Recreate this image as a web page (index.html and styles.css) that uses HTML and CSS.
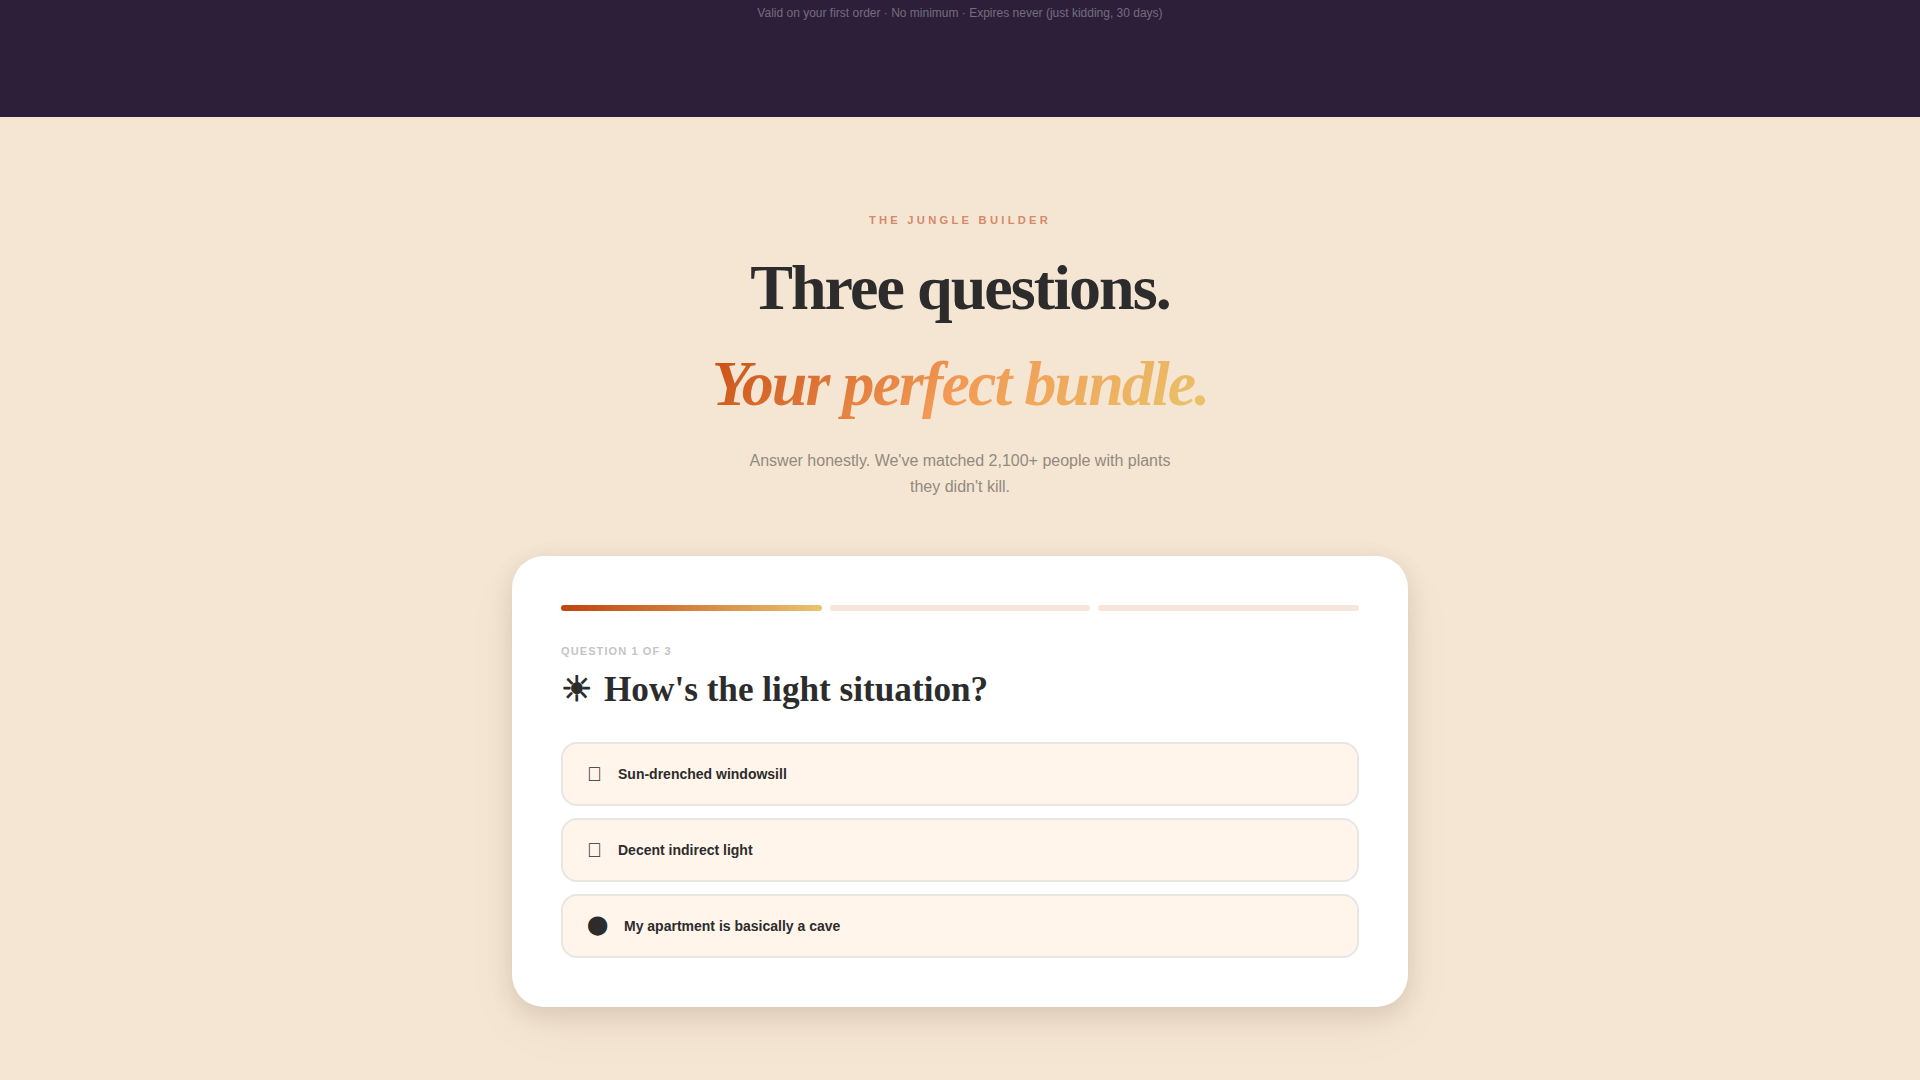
FILE: index.html
```html
<!DOCTYPE html>
<html lang="en">
<head>
  <meta charset="UTF-8">
  <title>The Jungle Builder</title>
  <link rel="stylesheet" href="styles.css">
</head>
<body>

  <div class="promo-end">
    <p>Valid on your first order · No minimum · Expires never (just kidding, 30 days)</p>
  </div>

  <section class="builder">
    <p class="eyebrow">THE JUNGLE BUILDER</p>
    <h1>Three questions.</h1>
    <h1 class="accent"><em>Your perfect bundle.</em></h1>
    <p class="intro">Answer honestly. We've matched 2,100+ people with plants they didn't kill.</p>

    <div class="quiz-card">
      <div class="progress">
        <div class="step active"></div>
        <div class="step"></div>
        <div class="step"></div>
      </div>
      <p class="question-count">QUESTION 1 OF 3</p>
      <h2><span class="question-icon">☀</span>How's the light situation?</h2>
      <div class="options">
        <button class="option"><span class="option-icon">&#xE000;</span>Sun-drenched windowsill</button>
        <button class="option"><span class="option-icon">&#xE000;</span>Decent indirect light</button>
        <button class="option"><span class="option-icon dark">⬤</span>My apartment is basically a cave</button>
      </div>
    </div>
  </section>

</body>
</html>
```

FILE: styles.css
```css
* {
  box-sizing: border-box;
}
html, body {
  height: 1080px;
  overflow: hidden;
}
body {
  margin: 0;
  font-family: "Liberation Sans", Arial, sans-serif;
  background: #f5e6d3;
  color: #2c2c2c;
}
.promo-end {
  height: 117px;
  padding-top: 4px;
  background: #2d1f3a;
  text-align: center;
}
.promo-end p {
  margin: 0;
  font-size: 12px;
  line-height: 18px;
  color: rgba(255,255,255,0.35);
}
.builder {
  padding-top: 96px;
  text-align: center;
}
.eyebrow {
  margin: 0 0 13px;
  font-size: 11.2px;
  line-height: 14px;
  font-weight: 700;
  letter-spacing: 3.25px;
  color: #d4896b;
}
h1 {
  margin: 0;
  font-family: "Liberation Serif", "Times New Roman", serif;
  font-size: 64px;
  line-height: 96px;
  font-weight: 700;
  letter-spacing: -0.03em;
  color: #2c2c2c;
}
.accent em {
  background: linear-gradient(135deg, #c84e14, #f29a55, #e9c46a);
  -webkit-background-clip: text;
  background-clip: text;
  color: transparent;
}
.intro {
  width: 448px;
  margin: 16px auto 56px;
  font-size: 16px;
  line-height: 26px;
  color: #918a80;
}
.quiz-card {
  width: 896px;
  margin: 0 auto;
  padding: 48px;
  background: #fff;
  border: 1px solid rgba(255,255,255,0.6);
  border-radius: 32px;
  box-shadow: 0 8px 24px rgba(44,24,16,0.12), 0 20px 60px rgba(44,24,16,0.04);
  text-align: left;
}
.progress {
  display: flex;
  gap: 8px;
  margin-bottom: 33px;
}
.step {
  flex: 1;
  height: 6px;
  border-radius: 3px;
  background: #f5e6d9;
}
.step.active {
  background: linear-gradient(90deg, #c1440e, #e9c46a);
}
.question-count {
  margin: 0 0 8px;
  font-size: 11px;
  line-height: 14px;
  font-weight: 700;
  letter-spacing: 0.1em;
  color: #c4c4c4;
}
h2 {
  display: flex;
  gap: 12px;
  margin: 0 0 30px;
  padding-top: 2px;
  font-family: "Liberation Serif", "Times New Roman", serif;
  font-size: 35.2px;
  line-height: 44px;
  font-weight: 700;
  color: #2c2c2c;
}
.options {
  display: flex;
  flex-direction: column;
  gap: 12px;
}
.option {
  display: flex;
  align-items: center;
  gap: 16px;
  height: 64px;
  padding: 0 24px;
  background: #fff5eb;
  border: 2px solid #e8e6e3;
  border-radius: 16px;
  font-family: "Liberation Sans", Arial, sans-serif;
  font-size: 14px;
  font-weight: 700;
  color: #2c2c2c;
  text-align: left;
  cursor: pointer;
}
.option-icon {
  font-size: 20px;
  font-weight: 400;
}
.option-icon.dark {
  margin-top: -4px;
  font-size: 19px;
}
```
